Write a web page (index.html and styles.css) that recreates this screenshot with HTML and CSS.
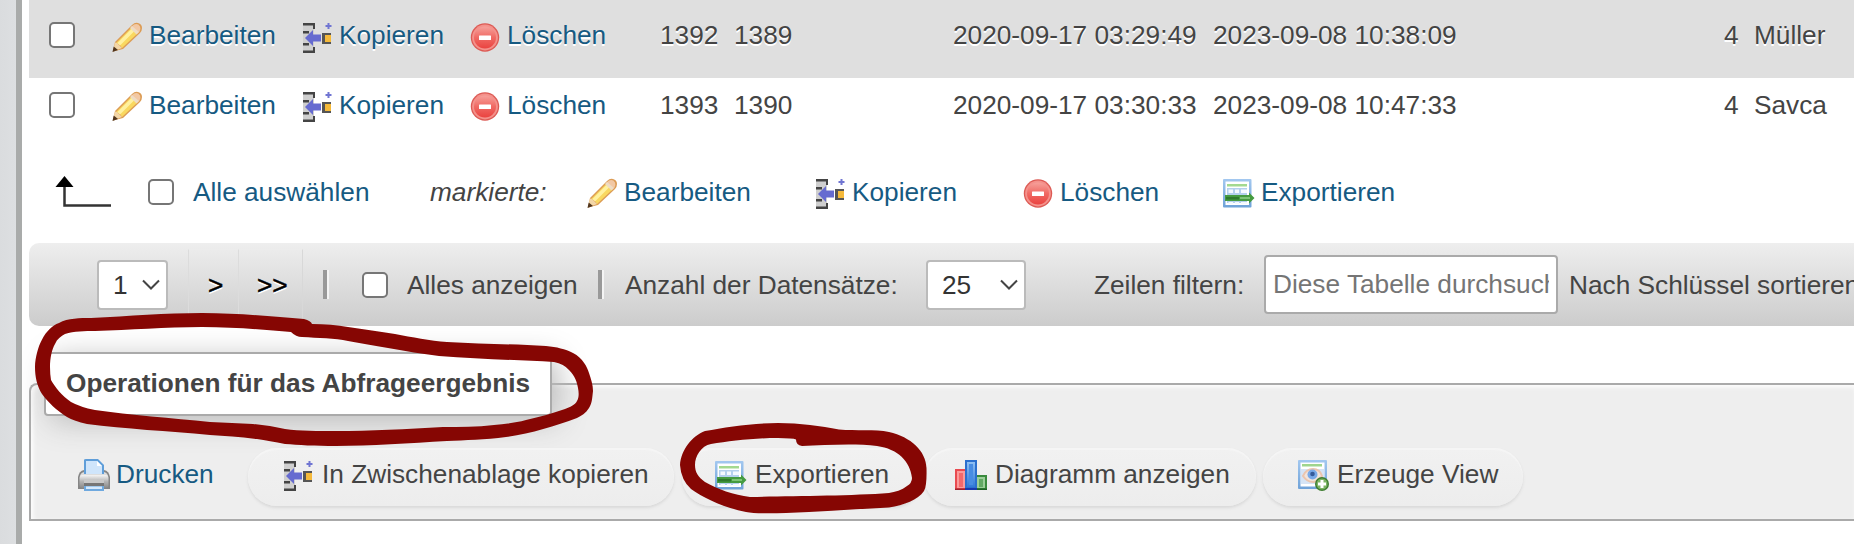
FILE: index.html
```html
<!DOCTYPE html>
<html lang="de">
<head>
<meta charset="utf-8">
<title>Abfrageergebnis</title>
<link rel="stylesheet" href="styles.css">
</head>
<body>
<svg class="defs" width="0" height="0" aria-hidden="true">
  <defs>
    <linearGradient id="g-red" x1="0" y1="0" x2="0" y2="1"><stop offset="0" stop-color="#f6a09a"/><stop offset=".5" stop-color="#f06a64"/><stop offset="1" stop-color="#ea4340"/></linearGradient>
    <linearGradient id="g-sheet" x1="0" y1="0" x2="0" y2="1"><stop offset="0" stop-color="#a3c8f0"/><stop offset="1" stop-color="#6fa2d8"/></linearGradient>
    <linearGradient id="g-printer" x1="0" y1="0" x2="0" y2="1"><stop offset="0" stop-color="#f4f4f4"/><stop offset=".5" stop-color="#b4b4b4"/><stop offset="1" stop-color="#8a8a8a"/></linearGradient>
    <linearGradient id="g-blue" x1="0" y1="0" x2="0" y2="1"><stop offset="0" stop-color="#8fc0f3"/><stop offset="1" stop-color="#2f79d8"/></linearGradient>
    <symbol id="i-edit" viewBox="0 0 32 32">
      <path d="M2 30.500 4 21 21 4Q24 1 27 2Q31 3 31 7Q31 10 29 12L12 28Z" fill="#dc9c55"/>
      <path d="M5 22 20 7 26 13 11 27 9 24Z" fill="#f9d860"/>
      <path d="M6.500 22 20.500 8 23 10.500 9 24.500Z" fill="#fff1a0"/>
      <path d="M20 6 23 3.500Q27 2 29 5.500Q30 8 28.500 10.500L26 13Z" fill="#f2c8a4"/>
      <path d="M19 7 21 5 28 11 25.500 13.500Z" fill="#eedcc4"/>
      <path d="M2 30.500 4 21.500 6 22 11 27Z" fill="#f3d6a7"/>
      <path d="M1.500 31 2.700 25.500 7 29Z" fill="#51351d"/>
    </symbol>
    <symbol id="i-copy" viewBox="0 0 32 32">
      <path d="M2 4H13V31H2Z" fill="#cfcfcf"/>
      <path d="M2 2H14V8H12V4.500H2ZM2 10H8V12.500H2ZM2 22H8V24.500H2ZM2 29.500V32H14V26H12V29.500Z" fill="#444"/>
      <path d="M4 17 12 9V13.500H20V20.500H12V25Z" fill="#666bd0"/>
      <path d="M21 12H30V14H24V21H30V23H21Z" fill="#555"/>
      <path d="M24 14H30V21H24Z" fill="#f5b93a"/>
      <path d="M26.500 2H28.500V4H30.500V6H28.500V8H26.500V6H24.500V4H26.500Z" fill="#7075d2"/>
    </symbol>
    <symbol id="i-delete" viewBox="0 0 32 32">
      <circle cx="16" cy="16.500" r="14.200" fill="#dc5a54"/>
      <circle cx="16" cy="16.500" r="12.900" fill="#f4918b"/>
      <circle cx="16" cy="16.500" r="11" fill="url(#g-red)"/>
      <rect x="10" y="14.500" width="12" height="4.500" rx=".5" fill="#fff"/>
    </symbol>
    <symbol id="i-export" viewBox="0 0 32 32">
      <rect y="2" width="28.500" height="28.500" rx="1" fill="url(#g-sheet)"/>
      <rect x="2.500" y="4.500" width="23.500" height="23.500" fill="#fff"/>
      <path d="M4 7H24V9.500H4Z" fill="#a3d990"/>
      <path d="M4 11H24V26H4Z" fill="#b4d0ee"/>
      <path d="M5.500 12.500H10V16H5.500ZM12 12.500H16V16H12ZM18 12.500H24V16H18ZM5.500 25H10V27H5.500ZM12 25H16V27H12ZM18 25H24V27H18Z" fill="#f4f9ff"/>
      <path d="M2 18H26V15.500L31.500 21 26 26.500V24H2Z" fill="#459b40"/>
      <path d="M3 20H16V22.500H3Z" fill="#2f7a2e"/><path d="M17 20H27V22H17Z" fill="#7cc476"/>
    </symbol>
    <symbol id="i-print" viewBox="0 0 32 32">
      <path d="M0 18Q1 12 6 11H26Q31 12 32 18V30H0Z" fill="#858585"/>
      <path d="M2 17Q3 13 7 13H25Q29 13 30 17Z" fill="#ddd"/>
      <rect x="1.500" y="16" width="29" height="13" rx="3" fill="url(#g-printer)"/>
      <path d="M6 1Q6 0 8 0H20L26 6V15H6Z" fill="#5f9ed9"/>
      <path d="M8 2H19L24 7V15H8Z" fill="#cfe5fb"/>
      <path d="M19 2V7H24Z" fill="#fff"/>
      <path d="M6 21H26V24H6Z" fill="#c9c9c9"/><path d="M6 24H26V27H6Z" fill="#777"/>
      <path d="M6 27H26V32H6Z" fill="#6fa9df"/><path d="M8 27.500H24V30H8Z" fill="#d7eafd"/>
    </symbol>
    <symbol id="i-chart" viewBox="0 0 32 32">
      <path d="M0 10H10V31H0Z" fill="#e94b51"/><path d="M2 12H10V29H2Z" fill="#fb9a9a"/><path d="M4 14H8V28H4Z" fill="#f3696c"/>
      <path d="M22 16H32V31H22Z" fill="#398a3d"/><path d="M22 18H30V29H22Z" fill="#9bce99"/><path d="M24 20H28V28H24Z" fill="#63a965"/>
      <path d="M10 1H22V31H10Z" fill="#2a6fce"/><path d="M12 3H20V28H12Z" fill="url(#g-blue)"/><path d="M14 5H18V26H14Z" fill="#478ce2"/>
      <path d="M0 29.500H10V31H0Z" fill="#a0222c"/><path d="M10 29H22V31H10Z" fill="#1838ae"/><path d="M22 29.500H32V31H22Z" fill="#1f6126"/>
    </symbol>
    <symbol id="i-view" viewBox="0 0 32 32">
      <rect x="1" y="1" width="29" height="29" rx="1" fill="url(#g-sheet)"/>
      <rect x="3.500" y="3.500" width="24" height="24" fill="#fff"/>
      <path d="M5 5H25V7.500H5Z" fill="#9fd58e"/>
      <path d="M4 10H27V25H4Z" fill="#d6e4f5"/>
      <path d="M6 17Q9 10 16 10T25 17Q22 23 16 23T6 17Z" fill="#f1e4dc" stroke="#ebc5ae" stroke-width="2"/>
      <circle cx="15.500" cy="15.500" r="5" fill="#78a9e8"/><circle cx="15.500" cy="15" r="2.300" fill="#345b9a"/>
      <circle cx="25" cy="25" r="7" fill="#3e7d31"/><circle cx="25" cy="25" r="5.500" fill="#7cb463"/>
      <path d="M23.500 21H26.500V23.500H29V26.500H26.500V29H23.500V26.500H21V23.500H23.500Z" fill="#fff"/>
    </symbol>
  </defs>
</svg>
<div class="app">
  <aside class="nav-edge"></aside>
  <main class="content">
    <div class="row odd">
      <span class="check"></span>
      <a class="link"><svg class="icon"><use href="#i-edit"/></svg>Bearbeiten</a>
      <a class="link"><svg class="icon"><use href="#i-copy"/></svg>Kopieren</a>
      <a class="link"><svg class="icon"><use href="#i-delete"/></svg>Löschen</a>
      <span>1392</span><span>1389</span><span>2020-09-17 03:29:49</span><span>2023-09-08 10:38:09</span><span>4</span><span>Müller</span>
    </div>
    <div class="row">
      <span class="check"></span>
      <a class="link"><svg class="icon"><use href="#i-edit"/></svg>Bearbeiten</a>
      <a class="link"><svg class="icon"><use href="#i-copy"/></svg>Kopieren</a>
      <a class="link"><svg class="icon"><use href="#i-delete"/></svg>Löschen</a>
      <span>1393</span><span>1390</span><span>2020-09-17 03:30:33</span><span>2023-09-08 10:47:33</span><span>4</span><span>Savca</span>
    </div>
    <div class="bulk">
      <svg class="arrow" viewBox="0 0 57 32"><path d="M9.500 6V29.500H56" fill="none" stroke="#333" stroke-width="2.500"/><path d="M9.500 0 18.500 11H.5Z" fill="#000"/></svg>
      <span class="check"></span>
      <a class="all">Alle auswählen</a>
      <em>markierte:</em>
      <a class="link"><svg class="icon"><use href="#i-edit"/></svg>Bearbeiten</a>
      <a class="link"><svg class="icon"><use href="#i-copy"/></svg>Kopieren</a>
      <a class="link"><svg class="icon"><use href="#i-delete"/></svg>Löschen</a>
      <a class="link"><svg class="icon"><use href="#i-export"/></svg>Exportieren</a>
    </div>
    <div class="pager">
      <span class="select page">1<svg class="chevron" viewBox="0 0 18 11"><path d="M1 1.500 9 9.500 17 1.500"/></svg></span>
      <span class="step next">&gt;</span><span class="step last">&gt;&gt;</span>
      <span class="sep"></span>
      <span class="check"></span>
      <span class="show-all">Alles anzeigen</span>
      <span class="sep"></span>
      <span class="count">Anzahl der Datensätze:</span>
      <span class="select size">25<svg class="chevron" viewBox="0 0 18 11"><path d="M1 1.500 9 9.500 17 1.500"/></svg></span>
      <span class="filter">Zeilen filtern:</span>
      <input class="search" type="text" placeholder="Diese Tabelle durchsuchen">
      <span class="sort">Nach Schlüssel sortieren:</span>
    </div>
    <section class="operations">
      <h2 class="legend">Operationen für das Abfrageergebnis</h2>
      <div class="buttons">
        <a class="link print"><svg class="icon"><use href="#i-print"/></svg>Drucken</a>
        <a class="button clip"><svg class="icon"><use href="#i-copy"/></svg>In Zwischenablage kopieren</a>
        <a class="button export"><svg class="icon"><use href="#i-export"/></svg>Exportieren</a>
        <a class="button chart"><svg class="icon"><use href="#i-chart"/></svg>Diagramm anzeigen</a>
        <a class="button view"><svg class="icon"><use href="#i-view"/></svg>Erzeuge View</a>
      </div>
    </section>
  </main>
  <svg class="marks" viewBox="0 0 1854 544" aria-hidden="true">
    <path d="M35 367C36 347 45 328 59 323C68 318 80 318 91 318C130 316 165 313 202 313C240 313 275 317 304 319Q311 321 312 324C325 324 337 325 348 327C364 329 380 332 395 334C412 337 430 341 447 342C480 344 515 344 546 346C557 347 565 349 573 353C583 358 587 367 589 373C591 379 593 385 593 391C592 400 592 403 589 408C586 413 581 416 577 418C555 426 530 434 506 437C485 440 465 440 447 441C410 443 370 446 336 446C315 446 298 445 285 444C275 442 265 440 257 439C240 437 225 436 210 435C168 431 125 429 87 424Q74 421 67 417C57 411 47 401 42 394C37 386 35 377 35 367Z
      M50 367C50 358 52 349 55 344C57 339 61 336 65 334C74 331 85 331 95 331C130 330 165 327 202 327C235 327 265 330 291 332Q296 337 302 337C318 338 335 338 348 341C361 343 374 346 388 348C406 351 422 354 439 356C478 359 518 360 554 362Q564 364 569 370C575 376 577 382 578 388C579 393 579 398 577 401C575 405 570 407 565 409C553 413 540 417 526 420C515 423 504 424 494 425C477 427 460 427 443 427C407 429 370 431 336 431C318 431 300 431 285 429C275 427 264 425 253 424C239 423 225 423 210 422C172 418 130 415 95 410Q80 407 71 402C62 396 55 387 51 380Q50 374 50 367Z"/>
    <path d="M680 465C681 450 692 436 705 431C726 427 753 423 778 423C800 423 821 426 839 429.500C856 431 875 429 889 432C911 437 926 451 926.500 468Q927 486 924 491C918 500 904 505 889 507.500C855 509 820 512 786 513Q757 514 746 512C722 507 704 498 691 489Q681 480 680 465Z
      M695 465C695 456 701 446 711 444C730 441 753 438 778 438Q793 438 796 439.500Q796 445 802 446C825 445 855 443 877 446C898 449 910 461 912 478Q912 483 907 486C902 490 895 492 889 493C850 496 790 496 750 497C734 495 717 489 705 482C698 477 695 472 695 465Z"/>
  </svg>
</div>
</body>
</html>
```
FILE: styles.css
```css
* { box-sizing: border-box; }
body {
  margin: 0;
  background: #fff;
  color: #444;
  font: 26.24px/30px "Liberation Sans", Arial, sans-serif;
  overflow: hidden;
}
.defs { position: absolute; }
.app { position: relative; display: flex; width: 1854px; height: 544px; overflow: hidden; white-space: nowrap; }
.nav-edge { flex: none; width: 22px; background: linear-gradient(90deg, #dadcde, #dddfe1); border-right: 6px solid #a9abaa; }
.content { flex: 1; min-width: 0; padding-left: 7px; }
.check { flex: none; width: 26px; height: 26px; border: 2px solid #767676; border-radius: 5px; background: #fff; }
.link { display: flex; align-items: center; gap: 6px; color: #165a82; }
.icon { flex: none; width: 32px; height: 32px; margin-left: -1px; }

.row {
  display: grid;
  grid-template-columns: 63px 190px 168px 189px 74px 220px 260px 511px 30px 1fr;
  align-items: center;
  height: 69px;
  padding: 0 0 16px 20px;
}
.row .icon { margin-top: 2px; margin-bottom: -1px; }
.row.odd { height: 78px; padding: 0 0 8px 20px; background: #dfdfdf; text-shadow: 0 2px 0 #fff; }
.row > span:nth-of-type(2), .row > span:nth-of-type(3) { padding-left: 1px; }

.bulk { display: flex; align-items: center; height: 96px; padding: 0 0 7px 26px; }
.arrow { width: 57px; height: 32px; margin-right: 36px; }
.all { width: 237px; margin-left: 19px; color: #165a82; }
.bulk em { width: 157px; }
.bulk .icon { margin-top: 2px; }
.bulk .link { width: 228px; }
.bulk .link:nth-of-type(3) { width: 208px; }
.bulk .link:nth-of-type(4) { width: 201px; }

.pager {
  display: flex;
  align-items: center;
  height: 83px;
  padding-left: 68px;
  border-radius: 10px 0 0 10px;
  background: linear-gradient(#eee, #ccc);
}
.pager > * { flex: none; }
.select {
  display: flex;
  align-items: center;
  justify-content: space-between;
  height: 50px;
  border: 2px solid #bbb;
  border-radius: 4px;
  background: #fff;
  color: #333;
}
.page { width: 71px; margin-right: 20px; padding: 0 6px 0 14px; }
.size { width: 100px; margin-right: 68px; padding: 0 6px 0 14px; }
.chevron { width: 18px; height: 11px; fill: none; stroke: #444; stroke-width: 2; }
.step {
  height: 71px;
  padding-top: 20px;
  border-left: 1px solid #dcdcdc;
  border-top: 1px solid #ececec;
  color: #000;
  text-shadow: 0 2px 0 #fff;
  -webkit-text-stroke: .5px #000;
}
.next { width: 50px; padding-left: 19px; }
.last { width: 65px; margin-right: 20px; padding-left: 18px; border-right: 1px solid #d8d8d8; }
.sep { width: 4px; height: 29px; background: #999; box-shadow: 2px 0 0 #f4f4f4; }
.sep + .check { margin: 0 19px 0 35px; }
.show-all { width: 191px; }
.count { width: 301px; margin-left: 23px; }
.filter { width: 170px; }
.search {
  width: 294px;
  height: 59px;
  margin-right: 11px;
  padding: 0 7px;
  border: 2px solid #aaa;
  border-radius: 4px;
  background: #fff;
  font: inherit;
}
.search::placeholder { color: #757575; opacity: 1; }

.operations {
  height: 138px;
  margin-top: 57px;
  border: 2px solid #aaa;
  border-right: 0;
  border-radius: 8px 0 0 0;
  background: #eee;
  box-shadow: inset 2px 2px 5px #fff;
}
.legend {
  width: 508px;
  height: 64px;
  margin: -33px 0 0 13px;
  padding: 14px 20px;
  border: 2px solid #aaa;
  border-radius: 4px;
  background: #fff;
  box-shadow: 6px 6px 30px #bbb;
  font-size: 26.24px;
  font-weight: bold;
}
.buttons { display: flex; align-items: center; margin-top: 32px; }
.buttons .icon { margin: 2px 0 0; }
.print { width: 170px; height: 58px; margin-left: 47px; padding-bottom: 6px; }
.button {
  display: flex;
  align-items: center;
  gap: 8px;
  height: 58px;
  padding-bottom: 6px;
  border-radius: 29px;
  background: linear-gradient(#f1f1f1, #ededed);
  box-shadow: 0 2px 3px #d9d9d9, inset 0 2px 1px #f5f5f5;
}
.clip { width: 426px; margin-right: 8px; padding-left: 34px; }
.export { width: 240px; margin-right: 2px; padding-left: 33px; }
.chart { width: 332px; margin-right: 7px; padding-left: 31px; }
.view { width: 260px; padding-left: 34px; }

.marks { position: absolute; inset: 0; width: 1854px; height: 544px; fill: #860603; fill-rule: evenodd; pointer-events: none; }
```
